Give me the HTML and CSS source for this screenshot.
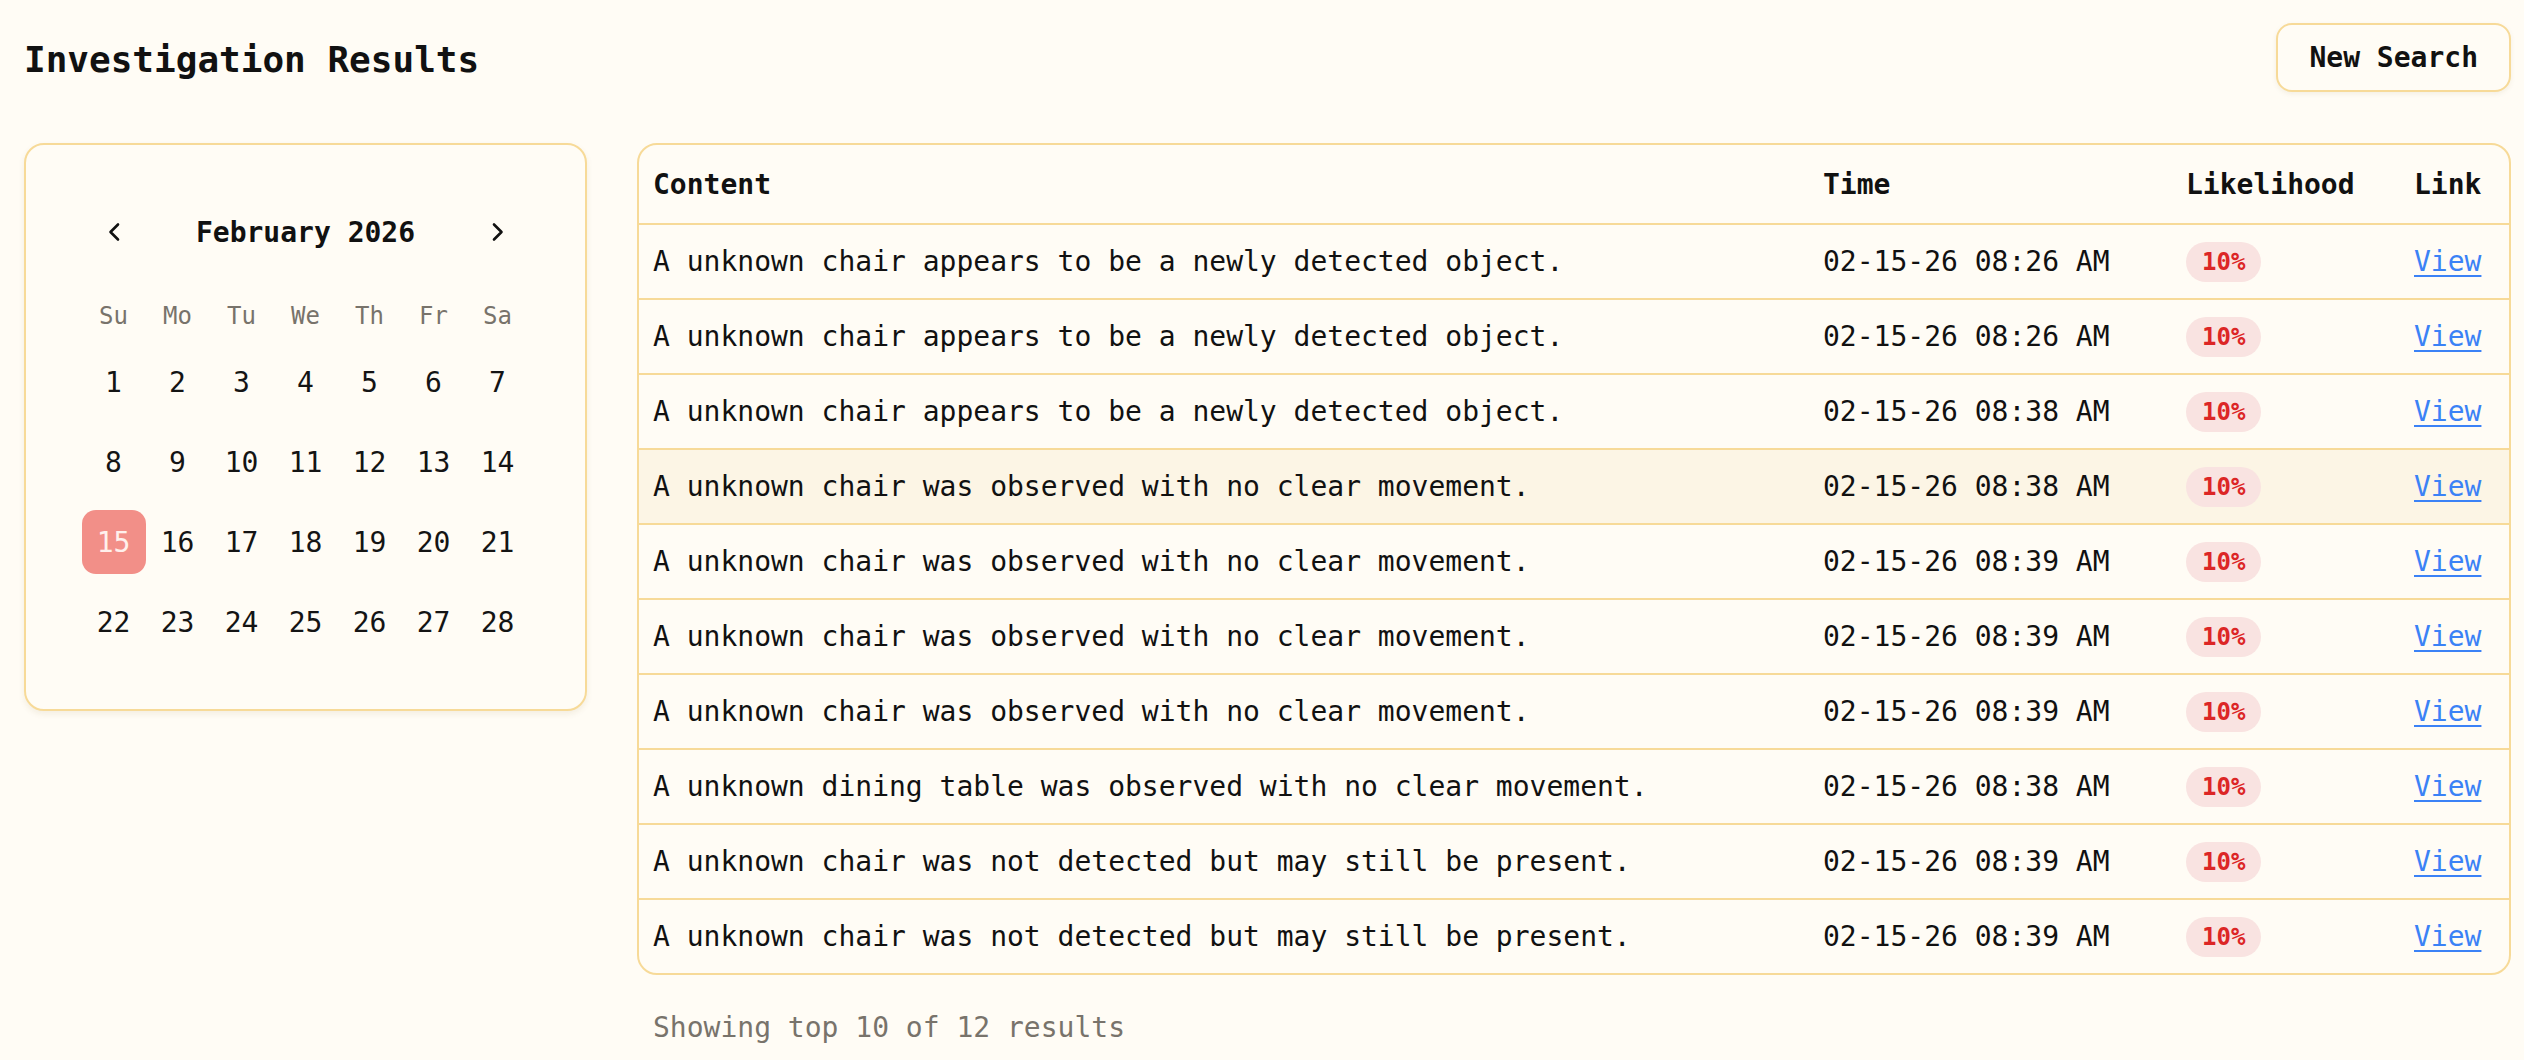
FILE: index.html
```html
<!DOCTYPE html>
<html lang="en">
<head>
<meta charset="utf-8">
<title>Investigation Results</title>
<link rel="stylesheet" href="styles.css">
</head>
<body>
<div class="page">
  <header class="topbar">
    <h1 class="title">Investigation Results</h1>
    <button class="btn-new">New Search</button>
  </header>

  <main class="layout">
    <section class="calendar-card">
      <div class="cal-head">
        <button class="cal-nav" aria-label="Previous month">
          <svg width="14" height="20" viewBox="0 0 14 20"><polyline points="11,2.5 3.5,10 11,17.5" fill="none" stroke="#111" stroke-width="2.6" stroke-linecap="round" stroke-linejoin="round"/></svg>
        </button>
        <div class="cal-month">February 2026</div>
        <button class="cal-nav" aria-label="Next month">
          <svg width="14" height="20" viewBox="0 0 14 20"><polyline points="3,2.5 10.5,10 3,17.5" fill="none" stroke="#111" stroke-width="2.6" stroke-linecap="round" stroke-linejoin="round"/></svg>
        </button>
      </div>
      <div class="cal-weekdays">
        <span>Su</span><span>Mo</span><span>Tu</span><span>We</span><span>Th</span><span>Fr</span><span>Sa</span>
      </div>
      <div class="cal-days">
        <span class="day">1</span><span class="day">2</span><span class="day">3</span><span class="day">4</span><span class="day">5</span><span class="day">6</span><span class="day">7</span>
        <span class="day">8</span><span class="day">9</span><span class="day">10</span><span class="day">11</span><span class="day">12</span><span class="day">13</span><span class="day">14</span>
        <span class="day day-selected">15</span><span class="day">16</span><span class="day">17</span><span class="day">18</span><span class="day">19</span><span class="day">20</span><span class="day">21</span>
        <span class="day">22</span><span class="day">23</span><span class="day">24</span><span class="day">25</span><span class="day">26</span><span class="day">27</span><span class="day">28</span>
      </div>
    </section>

    <section class="results">
      <div class="table-wrap">
        <table class="results-table">
          <colgroup>
            <col class="col-content">
            <col class="col-time">
            <col class="col-like">
            <col class="col-link">
          </colgroup>
          <thead>
            <tr><th>Content</th><th>Time</th><th>Likelihood</th><th>Link</th></tr>
          </thead>
          <tbody>
            <tr><td>A unknown chair appears to be a newly detected object.</td><td>02-15-26 08:26 AM</td><td><span class="badge">10%</span></td><td><a href="#" class="view">View</a></td></tr>
            <tr><td>A unknown chair appears to be a newly detected object.</td><td>02-15-26 08:26 AM</td><td><span class="badge">10%</span></td><td><a href="#" class="view">View</a></td></tr>
            <tr><td>A unknown chair appears to be a newly detected object.</td><td>02-15-26 08:38 AM</td><td><span class="badge">10%</span></td><td><a href="#" class="view">View</a></td></tr>
            <tr class="row-hover"><td>A unknown chair was observed with no clear movement.</td><td>02-15-26 08:38 AM</td><td><span class="badge">10%</span></td><td><a href="#" class="view">View</a></td></tr>
            <tr><td>A unknown chair was observed with no clear movement.</td><td>02-15-26 08:39 AM</td><td><span class="badge">10%</span></td><td><a href="#" class="view">View</a></td></tr>
            <tr><td>A unknown chair was observed with no clear movement.</td><td>02-15-26 08:39 AM</td><td><span class="badge">10%</span></td><td><a href="#" class="view">View</a></td></tr>
            <tr><td>A unknown chair was observed with no clear movement.</td><td>02-15-26 08:39 AM</td><td><span class="badge">10%</span></td><td><a href="#" class="view">View</a></td></tr>
            <tr><td>A unknown dining table was observed with no clear movement.</td><td>02-15-26 08:38 AM</td><td><span class="badge">10%</span></td><td><a href="#" class="view">View</a></td></tr>
            <tr><td>A unknown chair was not detected but may still be present.</td><td>02-15-26 08:39 AM</td><td><span class="badge">10%</span></td><td><a href="#" class="view">View</a></td></tr>
            <tr><td>A unknown chair was not detected but may still be present.</td><td>02-15-26 08:39 AM</td><td><span class="badge">10%</span></td><td><a href="#" class="view">View</a></td></tr>
          </tbody>
        </table>
      </div>
      <p class="summary">Showing top 10 of 12 results</p>
    </section>
  </main>
</div>
</body>
</html>
```

FILE: styles.css
```css
* { box-sizing: border-box; }

html, body {
  margin: 0;
  background: #fffcf5;
}

body {
  font-family: "DejaVu Sans Mono", "Liberation Mono", monospace;
  color: #111111;
  font-size: 28px;
}

.page {
  padding: 23px 13px 0 24px;
}

.topbar {
  display: flex;
  justify-content: space-between;
  align-items: center;
  height: 69px;
}

.title {
  margin: 0;
  font-size: 36px;
  font-weight: 700;
  line-height: 1;
  padding-top: 4px;
  color: #111;
}

.btn-new {
  height: 69px;
  padding: 0 31px;
  font-family: inherit;
  font-size: 28px;
  font-weight: 700;
  color: #111;
  background: #fffcf5;
  border: 2px solid #f7da98;
  border-radius: 16px;
  box-shadow: 0 2px 5px rgba(120, 90, 20, 0.08);
}

.layout {
  display: flex;
  align-items: flex-start;
  gap: 50px;
  margin-top: 51px;
}

/* Calendar */
.calendar-card {
  width: 563px;
  flex: none;
  padding: 55px 0;
  border: 2px solid #f7da98;
  border-radius: 20px;
  background: #fffcf5;
  box-shadow: 0 3px 6px rgba(120, 90, 20, 0.09);
  display: flex;
  flex-direction: column;
  align-items: center;
}

.cal-head {
  width: 448px;
  height: 64px;
  display: flex;
  align-items: center;
  justify-content: space-between;
}

.cal-nav {
  width: 64px;
  height: 64px;
  padding: 0;
  border: none;
  background: transparent;
  display: flex;
  align-items: center;
  justify-content: center;
}

.cal-month {
  font-size: 28px;
  font-weight: 700;
}

.cal-weekdays {
  margin-top: 32px;
  display: grid;
  grid-template-columns: repeat(7, 64px);
  height: 40px;
  align-items: center;
  justify-items: center;
  color: #78736b;
  font-size: 24px;
}

.cal-days {
  margin-top: 14px;
  display: grid;
  grid-template-columns: repeat(7, 64px);
  grid-auto-rows: 64px;
  row-gap: 16px;
}

.day {
  display: flex;
  align-items: center;
  justify-content: center;
  font-size: 28px;
  color: #141414;
  border-radius: 14px;
}

.day-selected {
  background: #f28f88;
  color: #fff0ec;
}

/* Results table */
.results {
  flex: 1;
  min-width: 0;
}

.table-wrap {
  border: 2px solid #f7da98;
  border-radius: 20px;
  overflow: hidden;
  background: #fffcf5;
}

.results-table {
  width: 100%;
  table-layout: fixed;
  border-collapse: separate;
  border-spacing: 0;
}

.col-content { width: 1170px; }
.col-time { width: 363px; }
.col-like { width: 228px; }
.col-link { width: 109px; }

.results-table th {
  height: 80px;
  padding: 0 14px;
  text-align: left;
  font-weight: 700;
  font-size: 28px;
  border-bottom: 2px solid #f7da98;
}

.results-table td {
  height: 75px;
  padding: 0 14px;
  font-size: 28px;
  white-space: nowrap;
  border-bottom: 2px solid #f7da98;
  vertical-align: middle;
}

.results-table tbody tr:last-child td {
  height: 73px;
  border-bottom: none;
}

.row-hover td {
  background: #fcf5e5;
}

.badge {
  display: inline-block;
  height: 40px;
  line-height: 40px;
  padding: 0 16px;
  border-radius: 20px;
  background: #f9e3e1;
  color: #dc2626;
  font-size: 24px;
  font-weight: 700;
}

.view {
  color: #3b82f6;
  text-decoration: underline;
  text-underline-offset: 4px;
}

.summary {
  margin: 32px 0 0;
  padding-left: 16px;
  color: #78736b;
  font-size: 28px;
  line-height: 42px;
}
```
